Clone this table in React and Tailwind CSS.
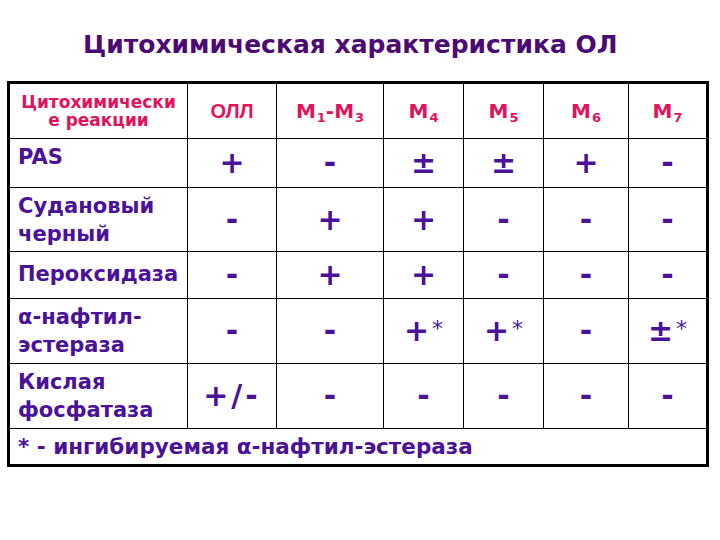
import React from 'react';

const BODY = 'text-[#4a1199]';
const HEAD = 'text-[#e3125c]';

const rows = [
  { label: ['PAS'], h: 'h-[49px]', vals: ['+', '-', '±', '±', '+', '-'] },
  { label: ['Судановый', 'черный'], h: 'h-[64px]', vals: ['-', '+', '+', '-', '-', '-'] },
  { label: ['Пероксидаза'], h: 'h-[47px]', pad: 'pt-2', vals: ['-', '+', '+', '-', '-', '-'] },
  { label: ['α-нафтил-', 'эстераза'], h: 'h-[65px]', vals: ['-', '-', '+*', '+*', '-', '±*'] },
  { label: ['Кислая', 'фосфатаза'], h: 'h-[65px]', vals: ['+/-', '-', '-', '-', '-', '-'] },
];

const heads = [
  ['М', '1', '-М', '3'],
  ['М', '4'],
  ['М', '5'],
  ['М', '6'],
  ['М', '7'],
];

function Sym({ v }) {
  if (v.endsWith('*')) {
    return (
      <span className="inline-flex items-start">
        <span>{v.slice(0, -1)}</span>
        <span className="ml-[3px] text-[22px] leading-none mt-[2px] font-normal">*</span>
      </span>
    );
  }
  if (v === '+/-') return <span className="tracking-[3px]">+/-</span>;
  return <span>{v}</span>;
}

function HeadCell({ parts }) {
  return (
    <span>
      {parts.map((p, i) =>
        i % 2 === 0 ? (
          <span key={i}>{p}</span>
        ) : (
          <sub key={i} className="text-[13px] align-baseline relative top-[4px] ml-[1px]">{p}</sub>
        ),
      )}
    </span>
  );
}

export default function App() {
  return (
    <div className="w-[720px] h-[540px] bg-white font-['DejaVu_Sans',sans-serif]">
      <h1 className="pt-[27px] pl-[83px] text-[25px] font-bold leading-[36px] text-[#4c0b73]">
        Цитохимическая характеристика ОЛ
      </h1>

      <table className="ml-[7px] mt-[18px] w-[699px] table-fixed border-collapse border-[3px] border-black">
        <colgroup>
          <col className="w-[179px]" />
          <col className="w-[89px]" />
          <col className="w-[107px]" />
          <col className="w-[80px]" />
          <col className="w-[80px]" />
          <col className="w-[85px]" />
          <col className="w-[79px]" />
        </colgroup>
        <thead>
          <tr className="h-[56px]">
            <th className={`border border-black text-center text-[17px] leading-[18px] font-bold ${HEAD}`}>
              Цитохимически<br />е реакции
            </th>
            <th className={`border border-black font-['Liberation_Sans',sans-serif] text-[20px] font-bold ${HEAD}`}>ОЛЛ</th>
            {heads.map((p, i) => (
              <th key={i} className={`border border-black text-[20px] font-bold ${HEAD}`}>
                <HeadCell parts={p} />
              </th>
            ))}
          </tr>
        </thead>
        <tbody>
          {rows.map((r, i) => (
            <tr key={i} className={r.h}>
              <td className={`border border-black align-top pl-[8px] ${r.pad || 'pt-1'} text-[21px] leading-[28px] font-bold ${BODY}`}>
                {r.label.map((l, j) => (
                  <div key={j}>{l}</div>
                ))}
              </td>
              {r.vals.map((v, j) => (
                <td key={j} className={`border border-black text-center align-middle text-[30px] leading-none font-bold ${BODY}`}>
                  <Sym v={v} />
                </td>
              ))}
            </tr>
          ))}
          <tr className="h-[37px]">
            <td colSpan={7} className={`border border-black pl-[8px] text-[21.5px] leading-[28px] font-bold ${BODY}`}>
              * - ингибируемая α-нафтил-эстераза
            </td>
          </tr>
        </tbody>
      </table>
    </div>
  );
}
